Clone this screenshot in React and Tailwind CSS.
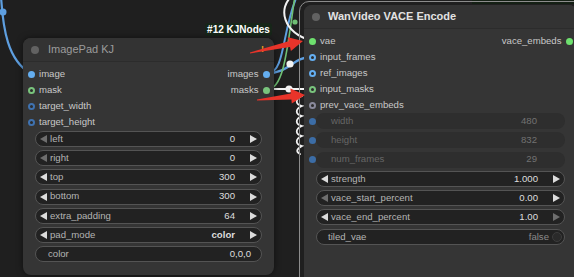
import React from 'react';

const Tri = ({ dir, on = true }) => (
  <svg width="7" height="8" viewBox="0 0 7 8" className="shrink-0">
    <polygon points={dir === 'left' ? '7,0 7,8 0,4' : '0,0 0,8 7,4'} fill={on ? '#dcdcdc' : '#6e6e6e'} />
  </svg>
);

function Dot({ color, ring }) {
  return ring ? (
    <span className="block w-[7px] h-[7px] rounded-full border-2 bg-[#2c2c2c] shrink-0" style={{ borderColor: color }} />
  ) : (
    <span className="block w-[7px] h-[7px] rounded-full shrink-0" style={{ background: color }} />
  );
}

function Slot({ label, color, ring, out, outColor }) {
  return (
    <div className="h-4 flex items-center text-[9.6px] text-[#c8c8c8]">
      {label ? (
        <>
          <span className="ml-[4.5px]"><Dot color={color} ring={ring} /></span>
          <span className="ml-[4.5px]">{label}</span>
        </>
      ) : null}
      {out ? (
        <>
          <span className="ml-auto">{out}</span>
          <span className="ml-[4.5px] mr-[4px]"><Dot color={outColor} /></span>
        </>
      ) : null}
    </div>
  );
}

function Num({ label, value, left = true, right = true, bold }) {
  return (
    <div className="h-4 flex items-center ml-3 mr-3 rounded-full bg-[#222] border border-[#545454] px-[4px] text-[9.6px]">
      <Tri dir="left" on={left} />
      <span className="ml-[3px] text-[#b4b4b4]">{label}</span>
      <span className={'ml-auto text-[#dedede]' + (bold ? ' font-bold' : '')}>{value}</span>
      <span className="ml-[15px]"><Tri dir="right" on={right} /></span>
    </div>
  );
}

function Converted({ label, value }) {
  return (
    <div className="h-4 flex items-center">
      <span className="ml-[4.5px] w-[7.5px]"><Dot color="#3c6da6" /></span>
      <div className="flex-1 h-4 flex items-center mr-3 rounded-full bg-[#2e2e2e] text-[9.6px]">
        <span className="ml-[15px] text-[#666]">{label}</span>
        <span className="ml-auto mr-[28px] text-[#727272]">{value}</span>
      </div>
    </div>
  );
}

export default function App() {
  return (
    <div className="relative w-[574px] h-[277px] overflow-hidden bg-[#1f1f1f] font-['Liberation_Sans',Arial,sans-serif]">
      {/* top-right neighbour strip */}
      <div className="absolute left-[472px] top-0 w-[110px] h-[4px] bg-[#142014]" />

      {/* links */}
      <svg className="absolute inset-0" width="574" height="277">
        <g fill="none" strokeLinecap="round">
          <path d="M1 -4 C 3 30, 8 60, 30 73" stroke="#5e9fe0" strokeWidth="2.2" />
          <path d="M268 73 C 285 73, 282 30, 297 -4" stroke="#5e9fe0" strokeWidth="2" />
          <path d="M268 73 C 290 73, 292 57, 312 57" stroke="#5e9fe0" strokeWidth="2.4" />
          <path d="M268 89 C 285 89, 288 40, 295 -4" stroke="#6fbf74" strokeWidth="1.6" />
          <path d="M292 -4 C 278 8, 282 32, 312 41" stroke="#f2f2f2" strokeWidth="2" />
          <path d="M268 89 L 312 89" stroke="#f2f2f2" strokeWidth="2" />
          <path d="M302 96 c -7 3, -7 8, 0 10 c -7 3, -7 8, 0 10 c -7 3, -7 8, 0 10 c -7 3, -7 8, 0 10 c -7 3, -7 8, 0 10 c -6 3, -6 6, -2 8" stroke="#f2f2f2" strokeWidth="1.8" />
        </g>
        <circle cx="3" cy="12" r="3.5" fill="#5e9fe0" />
        <circle cx="290" cy="64" r="3.6" fill="#f2f2f2" />
        <circle cx="289" cy="89" r="3.6" fill="#f2f2f2" />
        <circle cx="295" cy="22" r="2.6" fill="#6fbf74" />
      </svg>

      {/* selection outline of right node */}
      <div className="absolute left-[299px] top-[1px] w-[300px] h-[300px] rounded-[10px] border border-[#8c8c8c]" />

      {/* ImagePad KJ */}
      <div className="absolute left-[205px] top-[23px] h-[13px] w-[67px] rounded-[3px] bg-[#172619] flex items-center justify-center text-[10px] font-bold text-white">
        #12 KJNodes
      </div>
      <div className="absolute left-[23px] top-[38px] w-[251px] h-[237px] rounded-lg bg-[#353535] shadow-[0_0_6px_rgba(0,0,0,0.5)]">
        <div className="h-6 flex items-center border-b border-[#2c2c2c] rounded-t-lg bg-[#333]">
          <span className="ml-2 w-2 h-2 rounded-full bg-[#626262]" />
          <span className="ml-[9px] text-[11px] text-[#9c9c9c]">ImagePad KJ</span>
          <span className="ml-auto mr-[10px] text-[9px] font-bold text-[#e8a020]">!</span>
        </div>
        <div className="pt-1">
          <Slot label="image" color="#64aef0" out="images" outColor="#64aef0" />
          <Slot label="mask" color="#79c47d" ring out="masks" outColor="#79c47d" />
          <Slot label="target_width" color="#3f72b0" ring />
          <Slot label="target_height" color="#3f72b0" ring />
        </div>
        <div className="mt-px flex flex-col gap-[3.2px]">
          <Num label="left" value="0" left={false} />
          <Num label="right" value="0" left={false} />
          <Num label="top" value="300" />
          <Num label="bottom" value="300" />
          <Num label="extra_padding" value="64" />
          <Num label="pad_mode" value="color" bold />
          <div className="h-4 flex items-center ml-3 mr-3 rounded-full bg-[#222] border border-[#545454] text-[9.6px]">
            <span className="ml-[12px] text-[#b4b4b4]">color</span>
            <span className="ml-auto mr-[10px] text-[#dedede]">0,0,0</span>
          </div>
        </div>
      </div>

      {/* WanVideo VACE Encode */}
      <div className="absolute left-[304px] top-[5px] w-[273px] h-[290px] rounded-lg bg-[#353535]">
        <div className="h-6 flex items-center border-b border-[#2c2c2c] rounded-t-lg bg-[#333]">
          <span className="ml-2 w-2 h-2 rounded-full bg-[#626262]" />
          <span className="ml-[8px] text-[11px] font-bold text-[#e2e2e2]">WanVideo VACE Encode</span>
        </div>
        <div className="pt-1">
          <div className="h-4 flex items-center text-[9.6px] text-[#c8c8c8]">
            <span className="ml-[4.5px]"><Dot color="#6ee06e" /></span>
            <span className="ml-[4.5px]">vae</span>
            <span className="ml-auto">vace_embeds</span>
            <span className="ml-[4px] mr-[4.5px]"><Dot color="#6ee06e" /></span>
          </div>
          <Slot label="input_frames" color="#64aef0" ring />
          <Slot label="ref_images" color="#64aef0" ring />
          <Slot label="input_masks" color="#79c47d" ring />
          <Slot label="prev_vace_embeds" color="#8a8a9c" ring />
        </div>
        <div className="flex flex-col gap-[3.3px]">
          <Converted label="width" value="480" />
          <Converted label="height" value="832" />
          <Converted label="num_frames" value="29" />
          <Num label="strength" value="1.000" />
          <Num label="vace_start_percent" value="0.00" left={false} />
          <Num label="vace_end_percent" value="1.00" right={false} />
          <div className="h-4 flex items-center ml-3 mr-3 rounded-full bg-[#222] border border-[#545454] text-[9.6px]">
            <span className="ml-[11px] text-[#b4b4b4]">tiled_vae</span>
            <span className="ml-auto text-[#8a8a8a]">false</span>
            <span className="ml-[3px] mr-[2px] w-[10px] h-[10px] rounded-full bg-[#2a2a2a] border border-[#3c3c3c]" />
          </div>
        </div>
      </div>

      {/* annotation arrows */}
      <svg className="absolute inset-0 pointer-events-none" width="574" height="277">
        <polygon points="250.1,53.5 290,47 290.9,50.9 303,41 287.8,37.3 288.6,41.2 249.9,52.5" fill="#e8342a" />
        <polygon points="257,100.6 291.4,99.5 291.8,103.5 305,95 290.4,88.5 290.8,93.5 257,99.4" fill="#e8342a" />
      </svg>
    </div>
  );
}
